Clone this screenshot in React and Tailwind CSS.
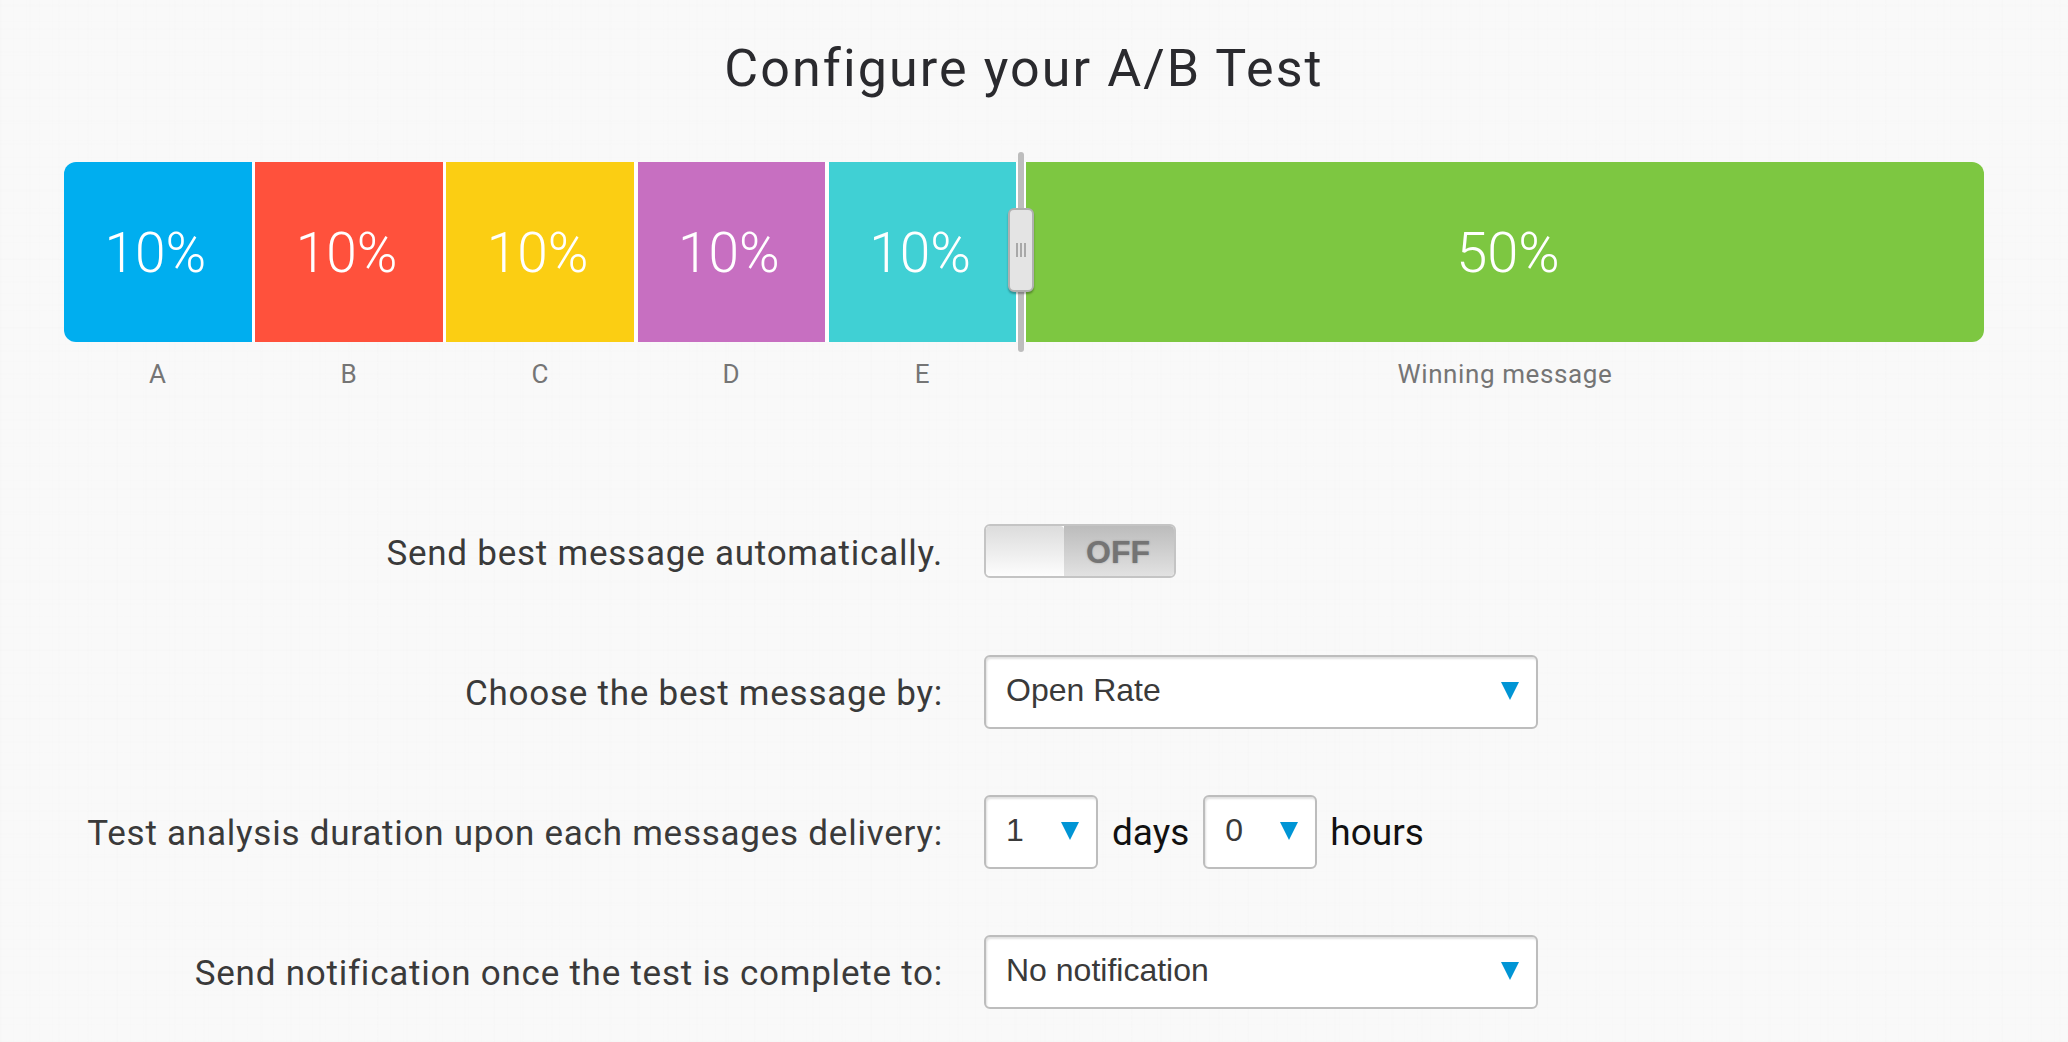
const ROBOTO = "font-['Roboto',sans-serif]";

const segments = [
  { label: "A", bg: "bg-[#00aeef]", round: "rounded-l-[12px]" },
  { label: "B", bg: "bg-[#ff513c]", round: "" },
  { label: "C", bg: "bg-[#fbce13]", round: "" },
  { label: "D", bg: "bg-[#c76fc1]", round: "" },
  { label: "E", bg: "bg-[#40d0d4]", round: "" },
];

function Arrow() {
  return (
    <svg width="18" height="18" viewBox="0 0 18 18" className="-mt-[2px] shrink-0">
      <path d="M0 0H18L9 18Z" fill="#0095d5" />
    </svg>
  );
}

function Select({ value, wide }) {
  return (
    <div
      className={`flex h-[74px] items-center justify-between rounded-[6px] border-2 border-[#bdbdbd] bg-white pl-[20px] pr-[17px] font-['Liberation_Sans',sans-serif] text-[32px] text-[#3a3a3a] shadow-[inset_1px_2px_2px_rgba(0,0,0,0.12)] ${
        wide ? "w-[554px]" : "w-[114px]"
      }`}
    >
      <span className="-mt-[5px]">{value}</span>
      <Arrow />
    </div>
  );
}

function Toggle() {
  return (
    <div className="-mt-[2px] flex h-[54px] w-[192px] overflow-hidden rounded-[6px] border-2 border-[#c4c4c4] bg-white">
      <div className="w-[78px] rounded-[4px] bg-gradient-to-b from-[#dcdcdc] to-[#fdfdfd]" />
      <div className="flex flex-1 items-center justify-center bg-gradient-to-b from-[#bcbcbc] to-[#e2e2e2] pr-[2px] pt-[2px] font-['Liberation_Sans',sans-serif] text-[32px] font-bold text-[#747474] [text-shadow:0_0_2px_rgba(90,90,90,0.5)]">
        OFF
      </div>
    </div>
  );
}

function Row({ label, children }) {
  return (
    <div className="flex h-[74px] items-center">
      <div className="w-[879px] shrink-0 pt-[4px] text-right text-[35px] tracking-[0.76px] text-[#3a3a3a]">{label}</div>
      <div className="ml-[41px] flex items-center">{children}</div>
    </div>
  );
}

export default function App() {
  return (
    <div
      className={`min-h-screen overflow-hidden bg-[#f9f9f9] bg-[repeating-linear-gradient(90deg,rgba(0,0,0,0.005)_0px,rgba(0,0,0,0.005)_1px,transparent_1px,transparent_13px),repeating-linear-gradient(0deg,rgba(0,0,0,0.005)_0px,rgba(0,0,0,0.005)_1px,transparent_1px,transparent_17px),repeating-linear-gradient(90deg,rgba(0,0,0,0.004)_0px,rgba(0,0,0,0.004)_2px,transparent_2px,transparent_29px),repeating-linear-gradient(0deg,rgba(0,0,0,0.004)_0px,rgba(0,0,0,0.004)_2px,transparent_2px,transparent_23px)] pb-[33px] pl-[64px] pr-[84px] ${ROBOTO}`}
    >
      <h1 className="flex h-[136px] items-center justify-center pt-[2px] text-[52px] font-normal tracking-[2.1px] text-[#2a2a2e]">
        Configure your A/B Test
      </h1>

      <div className="mt-[26px] flex h-[180px] rounded-[12px] bg-white">
        <div className="flex gap-[3.6px]">
          {segments.map((s) => (
            <div
              key={s.label}
              className={`flex w-[187.6px] items-center justify-center pr-[5px] pt-[2px] text-[55px] font-light text-white ${s.bg} ${s.round}`}
            >
              10%
            </div>
          ))}
        </div>
        <div className="relative w-[9.6px] shrink-0">
          <div className="absolute left-[1.6px] top-[-10px] h-[200px] w-[6px] rounded-[3px] bg-[#bdbdbd]" />
          <div className="absolute left-[-8.4px] top-[46px] flex h-[84px] w-[26px] items-center justify-center gap-[2px] rounded-[6px] border-2 border-[#b0b0b0] bg-[#e4e4e4] shadow-[0_2px_2px_rgba(0,0,0,0.3)]">
            <span className="h-[14px] w-[2px] bg-[#a8a8a8]" />
            <span className="h-[14px] w-[2px] bg-[#a8a8a8]" />
            <span className="h-[14px] w-[2px] bg-[#a8a8a8]" />
          </div>
        </div>
        <div className="flex flex-1 items-center justify-center rounded-r-[12px] bg-[#7dc741] pl-[6px] pt-[2px] text-[56px] font-light text-white">
          50%
        </div>
      </div>

      <div className="flex h-[65px] items-center text-[26px] tracking-[0.6px] text-[#757575]">
        <div className="flex gap-[3.6px]">
          {segments.map((s) => (
            <div key={s.label} className="w-[187.6px] text-center">
              {s.label}
            </div>
          ))}
        </div>
        <div className="w-[9.6px] shrink-0" />
        <div className="flex-1 text-center">Winning message</div>
      </div>

      <div className="mt-[108px] flex flex-col gap-[66px]">
        <Row label="Send best message automatically.">
          <Toggle />
        </Row>
        <Row label="Choose the best message by:">
          <Select wide value="Open Rate" />
        </Row>
        <Row label="Test analysis duration upon each messages delivery:">
          <Select value="1" />
          <span className="ml-[14px] mr-[14px] pt-[2px] text-[37px] text-[#111]">days</span>
          <Select value="0" />
          <span className="ml-[13px] pt-[2px] text-[37px] text-[#111]">hours</span>
        </Row>
        <Row label="Send notification once the test is complete to:">
          <Select wide value="No notification" />
        </Row>
      </div>
    </div>
  );
}
